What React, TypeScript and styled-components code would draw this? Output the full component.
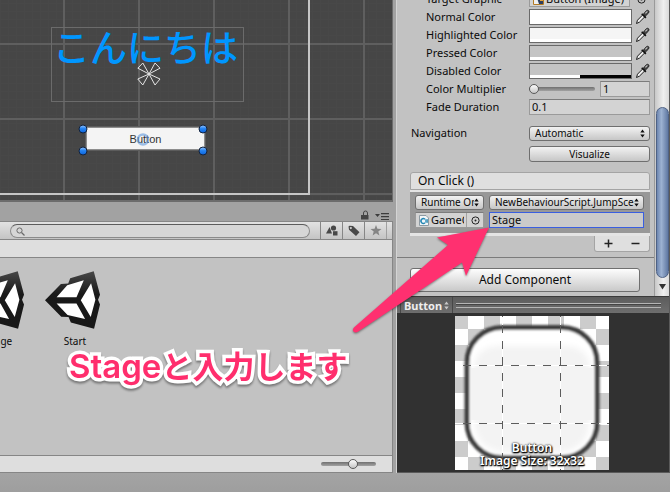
import React from "react";
import styled, { createGlobalStyle, css } from "styled-components";

const GlobalStyle = createGlobalStyle`
  *, *::before, *::after { box-sizing: border-box; }
  body {
    margin: 0;
    background: #a2a2a2;
    color: #0a0a0a;
    font: 11px/16px "Noto Sans", "Open Sans", "Noto Sans CJK JP", sans-serif;
  }
  button, input, select { font: inherit; color: inherit; margin: 0; }
`;

const Editor = styled.div`
  position: relative;
  display: flex;
  flex-direction: column;
  min-height: 100vh;
  overflow: hidden;
`;

const Workspace = styled.div`
  flex: 1;
  display: grid;
  grid-template-columns: minmax(0, 1fr) 274px;
  column-gap: 3px;
`;

const StatusBar = styled.footer`
  height: 19px;
  background: linear-gradient(#a4a4a4, #9e9e9e);
`;

const LeftColumn = styled.div`
  display: flex;
  flex-direction: column;
  min-width: 0;
`;

/* Scene view */

const Scene = styled.section`
  position: relative;
  height: 202px;
  overflow: hidden;
  border-right: 1px solid #6c6c6c;
  border-bottom: 2px solid #6c6c6c;
  background-color: #464646;
  background-image:
    linear-gradient(90deg, #5f5f5f 2px, transparent 2px),
    linear-gradient(#5f5f5f 2px, transparent 2px),
    linear-gradient(90deg, #484848 1px, transparent 1px),
    linear-gradient(#484848 1px, transparent 1px);
  background-size: 75px 75px, 75px 75px, 8px 8px, 8px 8px;
  background-position: 63px 0, 0 43px, 0 0, 0 3px;
`;

const CanvasEdge = styled.div`
  position: absolute;
  left: -2px;
  top: -2px;
  width: 312px;
  height: 197px;
  border: 2px solid #c6c6c6;
`;

const TextRect = styled.div`
  position: absolute;
  left: 51px;
  top: 27px;
  width: 193px;
  height: 75px;
  padding-left: 1px;
  border: 1px solid #6b6b6b;
  color: #0096ff;
  font: 500 37px/36px "Noto Sans CJK JP", sans-serif;
  white-space: nowrap;
`;

const AnchorMark = styled.svg`
  position: absolute;
  left: 136px;
  top: 61px;
`;

const SceneButton = styled.button`
  position: absolute;
  left: 86px;
  top: 127px;
  width: 119px;
  height: 23px;
  padding: 0;
  border: 1px solid #8d8d8d;
  outline: 1px solid #5c5c5c;
  background: #f4f4f4;
  color: #333;
  font: 11px/20px "Liberation Sans", sans-serif;
`;

const Handles = styled.svg`
  position: absolute;
  left: 78px;
  top: 124px;
`;

/* Project browser */

const TabStrip = styled.div`
  display: flex;
  justify-content: flex-end;
  align-items: flex-end;
  gap: 6px;
  height: 19px;
  padding: 0 4px 1px 0;
`;

const BareButton = styled.button`
  display: grid;
  place-items: center;
  padding: 0;
  border: 0;
  background: none;
`;

const Browser = styled.section`
  flex: 1;
  display: flex;
  flex-direction: column;
  border: solid #868686;
  border-width: 1px 1px 1px 0;
  background: #c2c2c2;
`;

const SearchBar = styled.div`
  display: flex;
  height: 18px;
  padding-left: 10px;
  border-bottom: 1px solid #868686;
  background: linear-gradient(#e2e2e2, #c4c4c4);
`;

const SearchField = styled.label`
  flex: 1;
  display: flex;
  align-items: center;
  height: 14px;
  margin: 2px 10px 0 0;
  padding-left: 5px;
  border: 1px solid #8b8b8b;
  border-top-color: #5c5c5c;
  border-radius: 7px;
  background: #d6d6d6;
`;

const SearchInput = styled.input`
  flex: 1;
  min-width: 0;
  height: 12px;
  border: 0;
  outline: 0;
  background: none;
`;

const FilterButton = styled(BareButton)`
  width: 22px;
  border-left: 1px solid #868686;
  color: #484848;
`;

const BarEnd = styled.div`
  width: 6px;
  border-left: 1px solid #a0a0a0;
`;

const PathBar = styled.div`
  height: 18px;
  border-bottom: 1px solid #868686;
  background: #dedede;
`;

const Assets = styled.ul`
  flex: 1;
  display: flex;
  margin: 0 0 0 -39px;
  padding: 13px 0 0;
  list-style: none;
`;

const Asset = styled.li`
  display: flex;
  flex-direction: column;
  align-items: center;
  gap: 4px;
  width: 76px;
  font-size: 10px;
  line-height: 16px;
`;

const BrowserFooter = styled.div`
  display: flex;
  justify-content: flex-end;
  align-items: center;
  height: 17px;
  padding-right: 16px;
  border-top: 1px solid #868686;
  background: #dedede;
`;

const Range = styled.input<{ $width: number }>`
  appearance: none;
  width: ${(p) => p.$width}px;
  height: 12px;
  background: none;
  &::-webkit-slider-runnable-track {
    height: 4px;
    border-radius: 2px;
    background: linear-gradient(#707070, #a2a2a2);
  }
  &::-webkit-slider-thumb {
    appearance: none;
    width: 10px;
    height: 10px;
    margin-top: -3px;
    border: 1px solid #5a5a5a;
    border-radius: 50%;
    background: linear-gradient(#fbfbfb, #c6c6c6);
  }
`;

/* Inspector */

const RightColumn = styled.aside`
  display: flex;
  flex-direction: column;
  border-right: 1px solid #5a5a5a;
  border-left: 1px solid #d4d4d4;
  background: #c2c2c2;
`;

const InspectorArea = styled.div`
  display: grid;
  grid-template-columns: minmax(0, 1fr) 15px;
  height: 296px;
`;

const Inspector = styled.div`
  display: flex;
  flex-direction: column;
  overflow: hidden;
`;

const Properties = styled.div`
  display: flex;
  flex-direction: column;
  margin-top: -10px;
  padding: 0 4px 0 14px;
`;

const Row = styled.div<{ $gapBefore?: number; $nested?: boolean }>`
  display: grid;
  grid-template-columns: minmax(0, 1fr) 121px;
  align-items: center;
  height: 18px;
  margin-top: ${(p) => p.$gapBefore ?? 0}px;
  padding-left: ${(p) => (p.$nested ? 15 : 0)}px;
  white-space: nowrap;
`;

const Field = styled.div`
  display: flex;
  align-items: center;
  gap: 3px;
`;

const box = css`
  height: 16px;
  border: 1px solid #9a9a9a;
  border-top-color: #7c7c7c;
  background: #d3d3d3;
`;

const TextInput = styled.input<{ $active?: boolean }>`
  ${box}
  flex: 1;
  width: 100%;
  min-width: 0;
  padding: 0 2px;
  outline: 0;
  ${(p) =>
    p.$active &&
    css`
      border: 1px solid #3a5fe0;
      background: #cacaca;
    `}
`;

const NumberInput = styled(TextInput)`
  flex: none;
  width: 50px;
  margin-left: 2px;
`;

const Swatch = styled.button<{ $color: string; $alpha: number }>`
  flex: 1;
  height: 16px;
  padding: 0;
  border: 1px solid #6a6a6a;
  background:
    linear-gradient(90deg, #fff ${(p) => p.$alpha}%, #000 ${(p) => p.$alpha}%) 0 100% / 100% 3px no-repeat,
    ${(p) => p.$color};
`;

const Dropper = styled(BareButton)`
  width: 15px;
  height: 16px;
`;

const ObjectField = styled.div`
  ${box}
  flex: 1;
  display: flex;
  align-items: center;
  gap: 2px;
  min-width: 0;
  overflow: hidden;
  white-space: nowrap;
  padding-left: 3px;
`;

const ObjectName = styled.span`
  flex: 1;
  min-width: 0;
  overflow: hidden;
  line-height: 14px;
`;

const PickButton = styled(BareButton)<{ $boxed?: boolean }>`
  width: 17px;
  height: 14px;
  ${(p) => p.$boxed && "border-left: 1px solid #a2a2a2;"}
`;

const raised = css`
  border: 1px solid #6f6f6f;
  border-radius: 3px;
  background: linear-gradient(#f2f2f2, #c6c6c6);
`;

const SelectBox = styled.div`
  flex: 1;
  display: flex;
  align-items: center;
  min-width: 0;
  height: 15px;
  padding-right: 4px;
  ${raised}
`;

const Select = styled.select`
  appearance: none;
  flex: 1;
  min-width: 0;
  height: 13px;
  padding: 0 0 0 5px;
  border: 0;
  outline: 0;
  background: none;
  font-size: 10px;
  line-height: 13px;
  text-overflow: clip;
`;

const SmallButton = styled.button`
  flex: 1;
  height: 16px;
  padding: 0;
  font-size: 10px;
  line-height: 14px;
  ${raised}
`;

const EventBlock = styled.div`
  margin: 9px 4px 0 13px;
`;

const EventHeader = styled.h2`
  height: 18px;
  margin: 0;
  padding-left: 7px;
  border: 1px solid #a4a4a4;
  border-radius: 3px 3px 0 0;
  background: #dfdfdf;
  font-size: 12px;
  font-weight: 400;
  line-height: 16px;
`;

const EventBody = styled.div`
  display: grid;
  grid-template-columns: 69px minmax(0, 1fr);
  gap: 2px 5px;
  padding: 2px 6px 5px 5px;
  border: solid #e4e4e4;
  border-width: 2px 0 3px;
  background: #989898;
`;

const EventCell = styled.div`
  display: flex;
  align-items: center;
  height: 16px;
  min-width: 0;
`;

const EventTools = styled.div`
  display: flex;
  justify-content: space-around;
  width: 56px;
  height: 16px;
  margin-left: auto;
  border: 1px solid #a4a4a4;
  border-top: 0;
  border-radius: 0 0 3px 3px;
  background: #dfdfdf;
`;

const AddArea = styled.div`
  margin-top: 5px;
  padding: 10px 14px 0 13px;
  border-top: 1px solid #7b7b7b;
`;

const AddButton = styled.button`
  display: block;
  width: 100%;
  height: 24px;
  padding: 0;
  font-size: 12px;
  line-height: 20px;
  ${raised}
  background: linear-gradient(#fdfdfd, #c9c9c9);
`;

const ScrollTrack = styled.div`
  display: flex;
  flex-direction: column;
  align-items: center;
  padding-top: 107px;
  border-left: 1px solid #9a9a9a;
  background: linear-gradient(90deg, #c8c8c8, #f0f0f0 60%, #dadada);
`;

const ScrollThumb = styled.div`
  flex: 1;
  width: 13px;
  border: 1px solid #4f6285;
  border-radius: 7px;
  background: linear-gradient(90deg, #6d86b0, #9db2d2 40%, #5f78a2);
`;

const ScrollDown = styled(BareButton)`
  height: 18px;
`;

/* Preview */

const PreviewHeader = styled.div`
  display: flex;
  align-items: center;
  height: 17px;
  border-top: 1px solid #3a3a3a;
  background: linear-gradient(#5c5c5c, #6e6e6e);
  color: #eee;
`;

const PreviewPicker = styled.div`
  display: flex;
  align-items: center;
  width: 53px;
  height: 16px;
  margin-left: 3px;
  padding-right: 3px;
  border: solid #474747;
  border-width: 0 1px;
`;

const PreviewSelect = styled(Select)`
  padding-left: 3px;
  font-size: 11px;
  font-weight: 700;
`;

const Grip = styled.div`
  flex: 1;
  height: 5px;
  margin: 0 8px 0 3px;
  border: solid #b4b4b4;
  border-width: 1px 0;
  background: linear-gradient(#444 1px, #666 1px);
`;

const PreviewBody = styled.div`
  flex: 1;
  display: grid;
  place-items: center;
  padding-right: 2px;
  border-bottom: 1px solid #5a5a5a;
  background: #313131;
`;

const PreviewStack = styled.figure`
  display: grid;
  margin: 0;
  > * { grid-area: 1 / 1; }
`;

const Caption = styled.figcaption`
  align-self: end;
  padding-bottom: 3px;
  color: #fff;
  font-size: 12px;
  font-weight: 600;
  line-height: 13px;
  text-align: center;
  text-shadow: 0 0 2px #000, 0 1px 2px #000, 1px 1px 1px #000;
`;

/* Callout drawn over the editor */

const Arrow = styled.svg`
  position: absolute;
  left: 345px;
  top: 220px;
  pointer-events: none;
  filter: drop-shadow(0 1px 1px rgba(0, 0, 0, 0.45));
`;

const Callout = styled.p`
  position: absolute;
  left: 69px;
  top: 342px;
  margin: 0;
  color: #ff2e6d;
  font: 700 31px/46px "Noto Sans CJK JP", sans-serif;
  white-space: nowrap;
  -webkit-text-stroke: 7px #fff;
  paint-order: stroke fill;
  stroke-linejoin: round;
  filter: drop-shadow(0 2px 1px rgba(0, 0, 0, 0.4));
`;

const CalloutLatin = styled.span`
  font-family: Inter, sans-serif;
  font-size: 33px;
  font-weight: 600;
`;

const UpDown = ({ color = "#111" }: { color?: string }) => (
  <svg width="5" height="9" viewBox="0 0 5 9" fill={color} aria-hidden="true">
    <path d="M2.5 0.5 4.7 3.6H0.3zM2.5 8.5 4.7 5.4H0.3z" />
  </svg>
);

const DropperIcon = () => (
  <svg width="15" height="16" viewBox="0 0 15 16" aria-hidden="true">
    <path d="M1.5 14.5 2.5 11.2 8 5.6 10 7.6 4.4 13.2Z" fill="#eee" stroke="#1c1c1c" strokeWidth="1" />
    <path d="M6.7 4.7 10.9 8.9" stroke="#111" strokeWidth="1.6" />
    <path d="M8.3 5.2 11 2Q12.5 .6 13.6 1.7T13.3 4.3L10.4 7.2Z" fill="#444" stroke="#111" strokeWidth=".7" />
    <path d="M10.4 4.4 12.4 2.4" stroke="#c4c4c4" strokeWidth="1.1" />
  </svg>
);

const PickIcon = () => (
  <svg width="9" height="9" viewBox="0 0 9 9" aria-hidden="true">
    <circle cx="4.5" cy="4.5" r="3.6" fill="none" stroke="#222" />
    <circle cx="4.5" cy="4.5" r="1" fill="#222" />
  </svg>
);

const UnityIcon = () => (
  <svg width="60" height="58" viewBox="137 212 181 173" aria-hidden="true">
    <defs>
      <linearGradient id="cube" x1="0" y1="0" x2="0" y2="1">
        <stop offset="0" stopColor="#484848" />
        <stop offset=".4" stopColor="#191919" />
        <stop offset="1" stopColor="#181818" />
      </linearGradient>
    </defs>
    <path
      fill="url(#cube)"
      d="M137 299 185 250 207 249 213 233 284 212 303 283 297 298 303 312 285 385 215 366 208 350 186 349Z"
    />
    <path
      fill="#fff"
      d="M172 290 204 254 254 239 232 290ZM172 309H232L258 356 205 344ZM245 299 276 248 289 298 275 350Z"
    />
  </svg>
);

const swatches = [
  { name: "Normal Color", color: "#ffffff", alpha: 100 },
  { name: "Highlighted Color", color: "#f5f5f5", alpha: 100 },
  { name: "Pressed Color", color: "#c4c4c4", alpha: 100 },
  { name: "Disabled Color", color: "#c4c4c4", alpha: 50 },
];

const handlePoints = [
  [5, 5],
  [125, 5],
  [5, 27],
  [125, 27],
];

function SceneView() {
  return (
    <Scene>
      <CanvasEdge />
      <TextRect>こんにちは</TextRect>
      <AnchorMark width="26" height="26" viewBox="0 0 26 26" aria-hidden="true">
        <path
          d="M13 13 1.8 7.2 6.8 2ZM13 13 19 2 24 7.2ZM13 13 1.8 18 6.8 24ZM13 13 24 18 19 24Z"
          fill="none"
          stroke="#e4e4e4"
        />
      </AnchorMark>
      <SceneButton>Button</SceneButton>
      <Handles width="130" height="32" viewBox="0 0 130 32" aria-hidden="true">
        <defs>
          <linearGradient id="ball" x1="0" y1="0" x2="0" y2="1">
            <stop offset="0" stopColor="#9cc8ff" />
            <stop offset=".45" stopColor="#2584f2" />
            <stop offset="1" stopColor="#0b62dc" />
          </linearGradient>
        </defs>
        {handlePoints.map(([x, y]) => (
          <circle key={`${x}-${y}`} cx={x} cy={y} r="4" fill="url(#ball)" stroke="#14233c" />
        ))}
        <circle cx="65" cy="15.5" r="5" fill="none" stroke="#5f97dc" strokeOpacity=".6" strokeWidth="2.5" />
      </Handles>
    </Scene>
  );
}

function ProjectBrowser() {
  return (
    <>
      <TabStrip>
        <BareButton aria-label="Lock">
          <svg width="8" height="10" viewBox="0 0 8 10">
            <path d="M2.5 5V3Q2.5 1 4.5 1T6.5 3V5" fill="none" stroke="#444" />
            <path d="M0 5H7.5V9.5H0z" fill="#444" />
          </svg>
        </BareButton>
        <BareButton aria-label="Panel menu">
          <svg width="14" height="8" viewBox="0 0 14 8">
            <path d="M0 2H5L2.5 5zM6 1H14V2.3H6zM6 4H14V5.3H6zM6 7H14V8H6z" fill="#3c3c3c" />
          </svg>
        </BareButton>
      </TabStrip>
      <Browser>
        <SearchBar>
          <SearchField>
            <svg width="9" height="9" viewBox="0 0 9 9" fill="none" stroke="#6a6a6a" aria-hidden="true">
              <circle cx="3.5" cy="3.5" r="2.6" />
              <path d="M5.5 5.5 8.5 8.5" strokeWidth="1.3" />
            </svg>
            <SearchInput aria-label="Search assets" />
          </SearchField>
          <FilterButton aria-label="Search by type">
            <svg width="12" height="11" viewBox="0 0 12 11" fill="currentColor">
              <path d="M0 8.5 3.6 2 6 8.5z" />
              <circle cx="7.5" cy="3" r="2.6" />
              <path d="M7 6.2H11.5V10.5H7z" />
            </svg>
          </FilterButton>
          <FilterButton aria-label="Search by label">
            <svg width="12" height="12" viewBox="0 0 12 12" fill="currentColor">
              <path fillRule="evenodd" d="M.5 1.5 1.5 .8 5 1 11.5 7.3 8 11 1 4.8zM2.8 2a1 1 0 1 0 .1 0z" />
            </svg>
          </FilterButton>
          <FilterButton aria-label="Save search">
            <svg width="12" height="11" viewBox="0 0 12 11" fill="#858585">
              <path d="M6 0 7.4 3.8 11.5 4 8.3 6.5 9.4 10.5 6 8.2 2.6 10.5 3.7 6.5 .5 4 4.6 3.8z" />
            </svg>
          </FilterButton>
          <BarEnd />
        </SearchBar>
        <PathBar />
        <Assets>
          {["Stage", "Start"].map((name) => (
            <Asset key={name}>
              <UnityIcon />
              {name}
            </Asset>
          ))}
        </Assets>
        <BrowserFooter>
          <Range $width={55} type="range" aria-label="Icon size" min="0" max="100" defaultValue="60" />
        </BrowserFooter>
      </Browser>
    </>
  );
}

function InspectorPanel() {
  return (
    <InspectorArea>
      <Inspector>
        <Properties>
          <Row $nested>
            <span>Target Graphic</span>
            <Field>
              <ObjectField>
                <svg width="11" height="11" viewBox="0 0 11 11" aria-hidden="true">
                  <path d="M.5 .5H10.5V10.5H.5z" fill="#f0f0f0" stroke="#b37a24" />
                  <path d="M4 4H10V10H6z" fill="#2e3f5e" />
                  <path d="M7 3H10V7H7z" fill="#e8a53a" />
                </svg>
                <ObjectName>Button (Image)</ObjectName>
              </ObjectField>
              <PickButton aria-label="Pick target graphic">
                <PickIcon />
              </PickButton>
            </Field>
          </Row>
          {swatches.map(({ name, color, alpha }) => (
            <Row key={name} $nested>
              <span>{name}</span>
              <Field>
                <Swatch aria-label={name} $color={color} $alpha={alpha} />
                <Dropper aria-label={`Pick ${name}`}>
                  <DropperIcon />
                </Dropper>
              </Field>
            </Row>
          ))}
          <Row $nested>
            <label htmlFor="multiplier">Color Multiplier</label>
            <Field>
              <Range $width={66} type="range" aria-label="Color Multiplier" min="1" max="5" defaultValue="1" />
              <NumberInput id="multiplier" defaultValue="1" />
            </Field>
          </Row>
          <Row $nested>
            <label htmlFor="fade">Fade Duration</label>
            <TextInput id="fade" defaultValue="0.1" />
          </Row>
          <Row $gapBefore={8}>
            <label htmlFor="navigation">Navigation</label>
            <SelectBox>
              <Select id="navigation">
                <option>Automatic</option>
              </Select>
              <UpDown />
            </SelectBox>
          </Row>
          <Row $gapBefore={3}>
            <span />
            <SmallButton>Visualize</SmallButton>
          </Row>
        </Properties>
        <EventBlock>
          <EventHeader>On Click ()</EventHeader>
          <EventBody>
            <EventCell>
              <SelectBox>
                <Select aria-label="Call state">
                  <option>Runtime Only</option>
                </Select>
                <UpDown />
              </SelectBox>
            </EventCell>
            <EventCell>
              <SelectBox>
                <Select aria-label="Function">
                  <option>NewBehaviourScript.JumpScene</option>
                </Select>
                <UpDown />
              </SelectBox>
            </EventCell>
            <EventCell>
              <ObjectField>
                <svg width="10" height="11" viewBox="0 0 10 11" aria-hidden="true">
                  <path d="M.5 .5H7L9.5 3V10.5H.5z" fill="#f2f6f8" stroke="#8d9aa2" />
                  <path d="M6 4.2A2.4 2.4 0 1 0 6 7.8" fill="none" stroke="#2387b5" strokeWidth="1.5" />
                  <path d="M6 5.2H9M6 6.8H9M7 4V8M8.3 4V8" stroke="#2387b5" strokeWidth=".7" />
                </svg>
                <ObjectName>GameObject</ObjectName>
                <PickButton $boxed aria-label="Pick object">
                  <PickIcon />
                </PickButton>
              </ObjectField>
            </EventCell>
            <EventCell>
              <TextInput $active aria-label="Argument" defaultValue="Stage" />
            </EventCell>
          </EventBody>
          <EventTools>
            <BareButton aria-label="Add event">
              <svg width="9" height="9" viewBox="0 0 9 9">
                <path d="M4.5 .5V8.5M.5 4.5H8.5" stroke="#222" strokeWidth="1.5" />
              </svg>
            </BareButton>
            <BareButton aria-label="Remove event">
              <svg width="9" height="9" viewBox="0 0 9 9">
                <path d="M.5 4.5H8.5" stroke="#222" strokeWidth="1.5" />
              </svg>
            </BareButton>
          </EventTools>
        </EventBlock>
        <AddArea>
          <AddButton>Add Component</AddButton>
        </AddArea>
      </Inspector>
      <ScrollTrack>
        <ScrollThumb />
        <ScrollDown aria-label="Scroll down">
          <svg width="7" height="6" viewBox="0 0 7 6">
            <path d="M0 0H7L3.5 5.5z" fill="#333" />
          </svg>
        </ScrollDown>
      </ScrollTrack>
    </InspectorArea>
  );
}

function SpritePreview() {
  return (
    <>
      <PreviewHeader>
        <PreviewPicker>
          <PreviewSelect aria-label="Preview sprite">
            <option>Button</option>
          </PreviewSelect>
          <UpDown color="#c8c8c8" />
        </PreviewPicker>
        <Grip />
      </PreviewHeader>
      <PreviewBody>
        <PreviewStack>
          <svg width="154" height="154" viewBox="0 0 154 154" aria-hidden="true">
            <defs>
              <pattern id="checker" x="-3" y="-3" width="32" height="32" patternUnits="userSpaceOnUse">
                <path d="M0 0H32V32H0z" fill="#fff" />
                <path d="M0 0H16V16H0zM16 16H32V32H16z" fill="#ccc" />
              </pattern>
              <filter id="soft" x="-10%" y="-10%" width="120%" height="120%">
                <feGaussianBlur stdDeviation="1.3" />
              </filter>
              <filter id="softer" x="-10%" y="-20%" width="120%" height="140%">
                <feGaussianBlur stdDeviation="3" />
              </filter>
            </defs>
            <path d="M0 0H154V154H0z" fill="url(#checker)" />
            <rect x="12" y="11.5" width="130" height="130" rx="35" fill="#fff" stroke="#3c3c3c" strokeWidth="5" filter="url(#soft)" />
            <path d="M19 50Q22 30 46 30H108Q132 30 135 50V105Q133 133 105 136H48Q21 133 19 105Z" fill="#f3f3f3" filter="url(#softer)" />
            <path d="M16 52H138V104H16z" fill="#f3f3f3" />
            <path d="M47.5 0V154M105.5 0V154M0 49.5H154M0 107.5H154" stroke="#fff" />
            <path
              d="M47.5 -7V154M105.5 -7V154M-8 49.5H154M-8 107.5H154"
              stroke="#5c5c5c"
              strokeDasharray="8 8"
            />
          </svg>
          <Caption>
            Button
            <br />
            Image Size: 32x32
          </Caption>
        </PreviewStack>
      </PreviewBody>
    </>
  );
}

export default function App() {
  return (
    <>
      <GlobalStyle />
      <Editor>
        <Workspace>
          <LeftColumn>
            <SceneView />
            <ProjectBrowser />
          </LeftColumn>
          <RightColumn>
            <InspectorPanel />
            <SpritePreview />
          </RightColumn>
        </Workspace>
        <StatusBar />
        <Arrow width="150" height="120" viewBox="345 220 150 120" aria-hidden="true">
          <path
            d="M489 227.5 437 237.5 448 245 354 327.5Q352 330 353.5 331.5T357.5 332L462 262.5 466 276Z"
            fill="#ff3070"
          />
        </Arrow>
        <Callout>
          <CalloutLatin>Stage</CalloutLatin>と入力します
        </Callout>
      </Editor>
    </>
  );
}
